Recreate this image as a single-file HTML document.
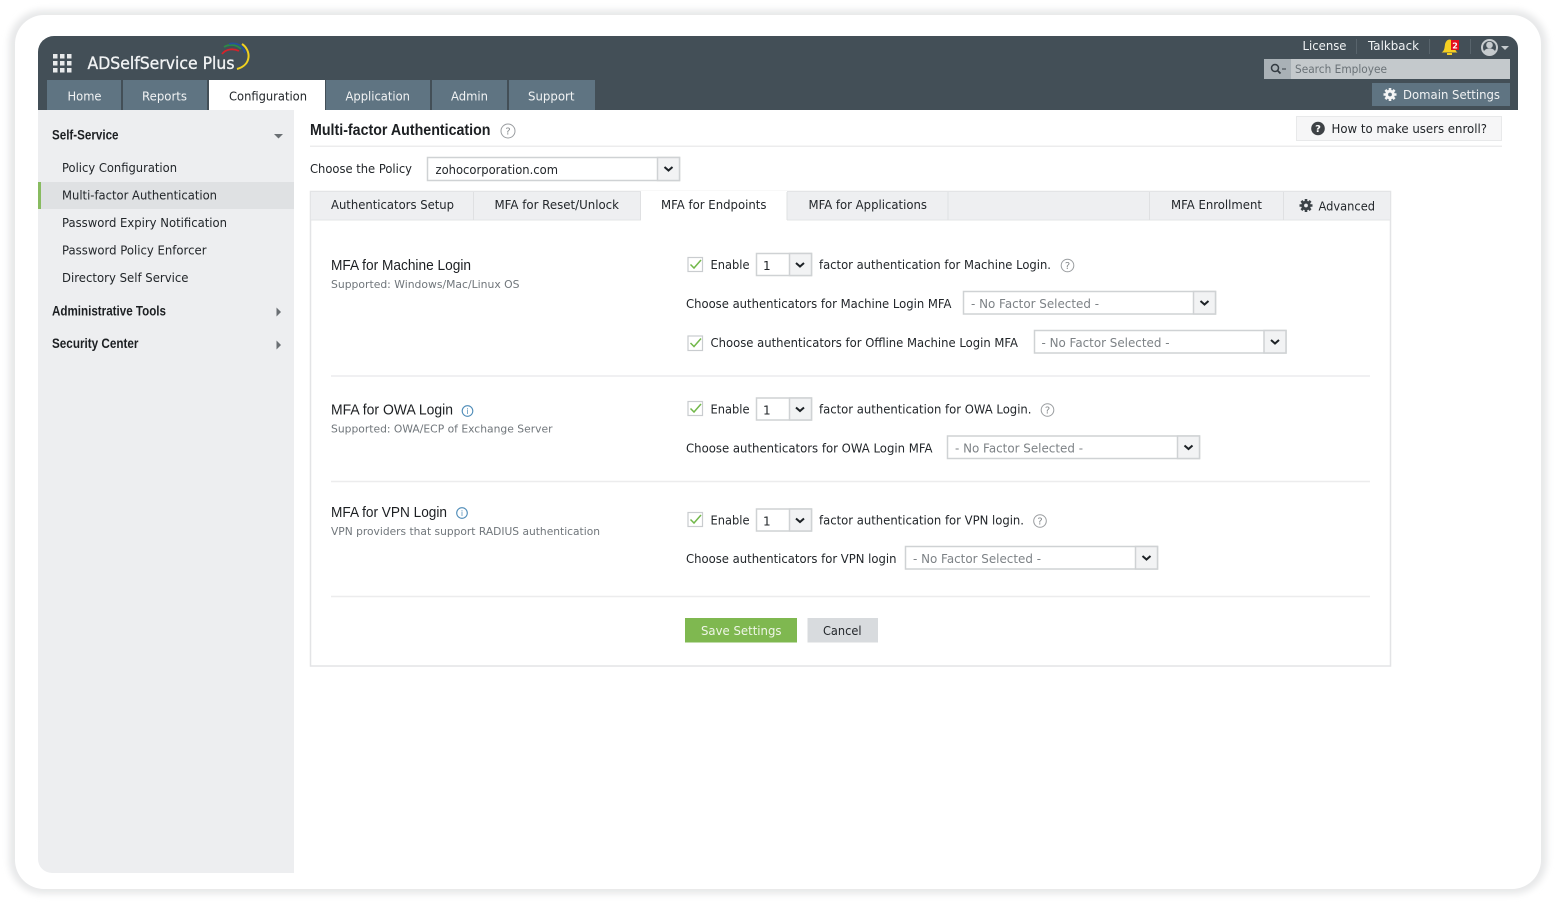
<!DOCTYPE html>
<html><head><meta charset="utf-8"><title>ADSelfService Plus</title>
<style>
html,body{margin:0;padding:0;background:#fff;width:1557px;height:905px;overflow:hidden}
svg{display:block;filter:blur(.25px)}
text{font-family:"DejaVu Sans","Liberation Sans",sans-serif;font-size:12px;fill:#22262a}
.h{font-family:"Liberation Sans",sans-serif;font-size:15px;fill:#1c1f22}
.b{font-family:"Liberation Sans",sans-serif;font-size:13.5px;font-weight:bold;fill:#1c1f22}
.w{fill:#f1f3f4}.g{fill:#70767b;font-size:11px}.p{fill:#7d8286}
.sel{fill:#fff;stroke:#cfd2d4;stroke-width:1.5}.arr{fill:#f2f3f4;stroke:#cfd2d4;stroke-width:1.5}
.chev{fill:none;stroke:#1d2226;stroke-width:2}
.cb{fill:#fff;stroke:#c9cccf;stroke-width:1.2}.ck{fill:none;stroke:#72b84a;stroke-width:1.5}
.ln{stroke:#ececed;stroke-width:1.5}
.q{fill:none;stroke:#9a9da0;stroke-width:1}
.qt{font-size:10px;fill:#85898c;text-anchor:middle}
.i{fill:none;stroke:#4f8cb8;stroke-width:1.1}.it{font-size:8px;fill:#4f8cb8;text-anchor:middle}
</style></head><body>
<svg width="1557" height="905" viewBox="0 0 1557 905" xmlns="http://www.w3.org/2000/svg">
<defs>
<filter id="sh" x="-5%" y="-5%" width="110%" height="110%"><feGaussianBlur stdDeviation="3.500"/></filter>
<g id="gear"><g stroke="currentColor" stroke-width="2.600"><path d="M0-6.500V6.500M-6.500 0H6.500M-4.600-4.600L4.600 4.600M-4.600 4.600L4.600-4.600"/></g><circle r="4.800" fill="currentColor"/><circle r="1.900" fill="var(--c,#fff)"/></g>
</defs>
<rect width="1557" height="905" fill="#fff"/>
<rect x="9" y="10" width="1538" height="884" rx="34" fill="#e7e8e9" filter="url(#sh)"/>
<rect x="15" y="15" width="1526" height="874" rx="29" fill="#fff"/>

<!-- header -->
<path d="M38 110V52a16 16 0 0 1 16-16H1506a12 12 0 0 1 12 12V110Z" fill="#434f57"/>
<g fill="#e8eaeb"><rect x="53" y="54" width="4.500" height="4.500"/><rect x="60" y="54" width="4.500" height="4.500"/><rect x="67" y="54" width="4.500" height="4.500"/><rect x="53" y="61" width="4.500" height="4.500"/><rect x="60" y="61" width="4.500" height="4.500"/><rect x="67" y="61" width="4.500" height="4.500"/><rect x="53" y="68" width="4.500" height="4.500"/><rect x="60" y="68" width="4.500" height="4.500"/><rect x="67" y="68" width="4.500" height="4.500"/></g>
<text x="87.500" y="69" textLength="147" lengthAdjust="spacingAndGlyphs" style="font-size:17px;stroke:#f1f3f4;stroke-width:.35" class="w">ADSelfService Plus</text>
<path d="M222 54c4-5 11-6 17-3" fill="none" stroke="#d8222a" stroke-width="1.800"/>
<path d="M224 47c5-3 12-3 17 2" fill="none" stroke="#2b8a46" stroke-width="1.800"/>
<path d="M229 44c7-2 14 1 16 9" fill="none" stroke="#26509c" stroke-width="1.800"/>
<path d="M242 44c9 6 10 21-5 25" fill="none" stroke="#f1d21f" stroke-width="2"/>

<!-- nav tabs -->
<g fill="#5f7482"><rect x="47" y="80" width="74" height="30"/><rect x="123" y="80" width="84" height="30"/><rect x="326" y="80" width="104" height="30"/><rect x="432" y="80" width="75" height="30"/><rect x="509" y="80" width="86" height="30"/></g>
<rect x="209" y="80" width="116" height="31" fill="#fff"/>
<text x="67.500" y="100.500" textLength="34" lengthAdjust="spacingAndGlyphs" class="w">Home</text>
<text x="142" y="100.500" textLength="45" lengthAdjust="spacingAndGlyphs" class="w">Reports</text>
<text x="229" y="100.500" textLength="78" lengthAdjust="spacingAndGlyphs">Configuration</text>
<text x="345.500" y="100.500" textLength="64.500" lengthAdjust="spacingAndGlyphs" class="w">Application</text>
<text x="451" y="100.500" textLength="37" lengthAdjust="spacingAndGlyphs" class="w">Admin</text>
<text x="528" y="100.500" textLength="46.500" lengthAdjust="spacingAndGlyphs" class="w">Support</text>

<!-- top right -->
<text x="1302.500" y="50" textLength="44" lengthAdjust="spacingAndGlyphs" class="w">License</text>
<rect x="1356" y="39" width="1" height="15" fill="#58646c"/>
<text x="1368" y="50" textLength="51" lengthAdjust="spacingAndGlyphs" class="w">Talkback</text>
<rect x="1429" y="39" width="1" height="15" fill="#58646c"/>
<path d="M1441.500 52.500c3-1.500 3-5 3.500-8s2.500-5 4.500-5 4.500 2 5 5 .5 6.500 3 8Z" fill="#f5cf22"/><rect x="1447" y="53" width="5" height="2" fill="#f5cf22"/>
<rect x="1451" y="40" width="8" height="10" fill="#e3101d"/>
<text x="1455" y="48.500" text-anchor="middle" style="font-size:8px;font-weight:bold;fill:#fff">2</text>
<rect x="1470" y="39" width="1" height="15" fill="#58646c"/>
<circle cx="1489.500" cy="47.500" r="7.500" fill="none" stroke="#c6cbce" stroke-width="2"/>
<circle cx="1489.500" cy="45" r="3.300" fill="#c6cbce"/><path d="M1483.500 52.500c1-3.500 3.500-4 6-4s5 .5 6 4l-3 2.500h-6Z" fill="#c6cbce"/>
<path d="M1501 46h8l-4 4Z" fill="#c6cbce"/>
<rect x="1264" y="59" width="246" height="20" fill="#c4c9cc"/><rect x="1264" y="59" width="27" height="20" fill="#a9b1b6"/>
<circle cx="1275" cy="68" r="3.500" fill="none" stroke="#333b41" stroke-width="1.500"/><path d="M1277.500 70.500l3 3" stroke="#333b41" stroke-width="1.800"/><path d="M1282 69h4" stroke="#333b41" stroke-width="1"/>
<text x="1295" y="73" textLength="92" lengthAdjust="spacingAndGlyphs" style="font-size:11.500px;fill:#6a7277">Search Employee</text>
<rect x="1372" y="83" width="138" height="23" fill="#5f7482"/>
<use href="#gear" x="1390" y="94.500" style="color:#f4f5f6;--c:#5f7482"/>
<text x="1403" y="99" textLength="97" lengthAdjust="spacingAndGlyphs" class="w">Domain Settings</text>

<!-- sidebar -->
<path d="M38 110H294V873H52a14 14 0 0 1-14-14Z" fill="#edeef0"/>
<rect x="38" y="182" width="256" height="27" fill="#dfe1e3"/><rect x="38" y="182" width="3" height="27" fill="#88bb60"/>
<text x="52" y="139.500" textLength="66.500" lengthAdjust="spacingAndGlyphs" class="b">Self-Service</text>
<path d="M274 134h9l-4.500 4.500Z" fill="#6a6f73"/>
<text x="62" y="172" textLength="115" lengthAdjust="spacingAndGlyphs">Policy Configuration</text>
<text x="62" y="199.500" textLength="155" lengthAdjust="spacingAndGlyphs">Multi-factor Authentication</text>
<text x="62" y="227" textLength="165" lengthAdjust="spacingAndGlyphs">Password Expiry Notification</text>
<text x="62" y="254.500" textLength="144.500" lengthAdjust="spacingAndGlyphs">Password Policy Enforcer</text>
<text x="62" y="282" textLength="126.500" lengthAdjust="spacingAndGlyphs">Directory Self Service</text>
<text x="52" y="315.500" textLength="114" lengthAdjust="spacingAndGlyphs" class="b">Administrative Tools</text>
<path d="M276.500 307.500v9l4.500-4.500Z" fill="#6a6f73"/>
<text x="52" y="348" textLength="86.500" lengthAdjust="spacingAndGlyphs" class="b">Security Center</text>
<path d="M276.500 340.500v9l4.500-4.500Z" fill="#6a6f73"/>

<!-- title -->
<text x="310" y="135" textLength="180.500" lengthAdjust="spacingAndGlyphs" style="font-family:'Liberation Sans',sans-serif;font-size:15.500px;font-weight:bold;fill:#1c1f22">Multi-factor Authentication</text>
<circle cx="508" cy="131" r="7" class="q"/><text x="508" y="134.500" class="qt">?</text>
<rect x="1296.500" y="116.500" width="205" height="24" fill="#f6f6f7" stroke="#e8e9ea"/>
<circle cx="1318" cy="128.500" r="6.800" fill="#3e4246"/><text x="1318" y="132" style="font-size:10px;font-weight:bold;fill:#fff;text-anchor:middle">?</text>
<text x="1331.500" y="133" textLength="155.500" lengthAdjust="spacingAndGlyphs">How to make users enroll?</text>
<rect x="310" y="145.500" width="1192" height="1.500" fill="#ececed"/>
<text x="310" y="173" textLength="102" lengthAdjust="spacingAndGlyphs">Choose the Policy</text>
<rect x="427.500" y="157.500" width="252" height="23" class="sel"/><rect x="657.500" y="157.500" width="22" height="23" class="arr"/>
<path d="M664.500 167l4 3.500 4-3.500" class="chev"/>
<text x="435.500" y="174" textLength="122.500" lengthAdjust="spacingAndGlyphs">zohocorporation.com</text>

<!-- panel -->
<rect x="310.500" y="191.500" width="1080" height="474.500" fill="#fff" stroke="#e3e4e6" stroke-width="1.500"/>
<rect x="310.500" y="191.500" width="1080" height="28.500" fill="#eeeff1" stroke="#e3e4e6"/>
<rect x="641" y="191" width="146" height="30" fill="#fff"/>
<path d="M473.500 192v28M640.500 192v28M787 192v28M948 192v28M1149.500 192v28M1283.500 192v28" stroke="#dfe0e2"/>
<text x="331" y="209" textLength="123" lengthAdjust="spacingAndGlyphs">Authenticators Setup</text>
<text x="494.500" y="209" textLength="124.500" lengthAdjust="spacingAndGlyphs">MFA for Reset/Unlock</text>
<text x="661" y="209" textLength="105.500" lengthAdjust="spacingAndGlyphs">MFA for Endpoints</text>
<text x="808.500" y="209" textLength="118.500" lengthAdjust="spacingAndGlyphs">MFA for Applications</text>
<text x="1171" y="209" textLength="91" lengthAdjust="spacingAndGlyphs">MFA Enrollment</text>
<use href="#gear" x="1306" y="205.500" style="color:#3b4247;--c:#eeeff1"/>
<text x="1318.500" y="210.500" textLength="56.500" lengthAdjust="spacingAndGlyphs">Advanced</text>

<!-- Machine login -->
<text x="331" y="270" textLength="140" lengthAdjust="spacingAndGlyphs" class="h">MFA for Machine Login</text>
<text x="331" y="288" textLength="188.500" lengthAdjust="spacingAndGlyphs" class="g">Supported: Windows/Mac/Linux OS</text>
<rect x="688" y="257.500" width="14.500" height="14" class="cb"/><path d="M690.500 264.500l3.500 3.500 7-8" class="ck"/>
<text x="710.500" y="269" textLength="39" lengthAdjust="spacingAndGlyphs">Enable</text>
<rect x="756.500" y="253.500" width="55" height="22" class="sel"/><rect x="789.500" y="253.500" width="22" height="22" class="arr"/><path d="M796 263l4 3.500 4-3.500" class="chev"/>
<text x="763" y="270">1</text>
<text x="819" y="269" textLength="232" lengthAdjust="spacingAndGlyphs">factor authentication for Machine Login.</text>
<circle cx="1067.500" cy="265.500" r="6.300" class="q"/><text x="1067.500" y="269" class="qt">?</text>
<text x="686" y="308" textLength="265.500" lengthAdjust="spacingAndGlyphs">Choose authenticators for Machine Login MFA</text>
<rect x="963.500" y="291.500" width="252" height="22.500" class="sel"/><rect x="1193.500" y="291.500" width="22" height="22.500" class="arr"/><path d="M1200.500 301l4 3.500 4-3.500" class="chev"/>
<text x="971" y="308" textLength="128" lengthAdjust="spacingAndGlyphs" class="p">- No Factor Selected -</text>
<rect x="688" y="336" width="14.500" height="14.500" class="cb"/><path d="M690.500 343l3.500 3.500 7-8" class="ck"/>
<text x="710.500" y="347" textLength="307.500" lengthAdjust="spacingAndGlyphs">Choose authenticators for Offline Machine Login MFA</text>
<rect x="1034.500" y="330.500" width="251.500" height="22.500" class="sel"/><rect x="1264" y="330.500" width="22" height="22.500" class="arr"/><path d="M1271 340l4 3.500 4-3.500" class="chev"/>
<text x="1041.500" y="347" textLength="128" lengthAdjust="spacingAndGlyphs" class="p">- No Factor Selected -</text>
<path d="M331 376h1039" class="ln"/>

<!-- OWA -->
<text x="331" y="414.500" textLength="122" lengthAdjust="spacingAndGlyphs" class="h">MFA for OWA Login</text>
<circle cx="467.500" cy="411" r="5.300" class="i"/><text x="467.500" y="414" class="it">i</text>
<text x="331" y="432.500" textLength="221.500" lengthAdjust="spacingAndGlyphs" class="g">Supported: OWA/ECP of Exchange Server</text>
<rect x="688" y="401.500" width="14.500" height="14" class="cb"/><path d="M690.500 408.500l3.500 3.500 7-8" class="ck"/>
<text x="710.500" y="413.500" textLength="39" lengthAdjust="spacingAndGlyphs">Enable</text>
<rect x="756.500" y="398" width="55" height="22" class="sel"/><rect x="789.500" y="398" width="22" height="22" class="arr"/><path d="M796 407.500l4 3.500 4-3.500" class="chev"/>
<text x="763" y="414.500">1</text>
<text x="819" y="413.500" textLength="212.500" lengthAdjust="spacingAndGlyphs">factor authentication for OWA Login.</text>
<circle cx="1047.500" cy="410" r="6.300" class="q"/><text x="1047.500" y="413.500" class="qt">?</text>
<text x="686" y="452.500" textLength="246.500" lengthAdjust="spacingAndGlyphs">Choose authenticators for OWA Login MFA</text>
<rect x="947.500" y="436" width="252" height="22.500" class="sel"/><rect x="1177.500" y="436" width="22" height="22.500" class="arr"/><path d="M1184.500 445.500l4 3.500 4-3.500" class="chev"/>
<text x="955" y="452.500" textLength="128" lengthAdjust="spacingAndGlyphs" class="p">- No Factor Selected -</text>
<path d="M331 481.500h1039" class="ln"/>

<!-- VPN -->
<text x="331" y="517" textLength="116" lengthAdjust="spacingAndGlyphs" class="h">MFA for VPN Login</text>
<circle cx="462" cy="513" r="5.300" class="i"/><text x="462" y="516" class="it">i</text>
<text x="331" y="535" textLength="269" lengthAdjust="spacingAndGlyphs" class="g">VPN providers that support RADIUS authentication</text>
<rect x="688" y="512.500" width="14.500" height="14" class="cb"/><path d="M690.500 519.500l3.500 3.500 7-8" class="ck"/>
<text x="710.500" y="524.500" textLength="39" lengthAdjust="spacingAndGlyphs">Enable</text>
<rect x="756.500" y="509" width="55" height="22" class="sel"/><rect x="789.500" y="509" width="22" height="22" class="arr"/><path d="M796 518.500l4 3.500 4-3.500" class="chev"/>
<text x="763" y="525.500">1</text>
<text x="819" y="524.500" textLength="205" lengthAdjust="spacingAndGlyphs">factor authentication for VPN login.</text>
<circle cx="1040" cy="521" r="6.300" class="q"/><text x="1040" y="524.500" class="qt">?</text>
<text x="686" y="563" textLength="210.500" lengthAdjust="spacingAndGlyphs">Choose authenticators for VPN login</text>
<rect x="905.500" y="546.500" width="252" height="22.500" class="sel"/><rect x="1135.500" y="546.500" width="22" height="22.500" class="arr"/><path d="M1142.500 556l4 3.500 4-3.500" class="chev"/>
<text x="913" y="563" textLength="128" lengthAdjust="spacingAndGlyphs" class="p">- No Factor Selected -</text>
<path d="M331 596.500h1039" class="ln"/>

<!-- buttons -->
<rect x="685" y="618" width="112" height="24.500" fill="#7fb850"/>
<text x="701" y="635" textLength="80.500" lengthAdjust="spacingAndGlyphs" style="fill:#eef5e6">Save Settings</text>
<rect x="807.500" y="618" width="70.500" height="24.500" fill="#d8dbde"/>
<text x="823" y="635" textLength="38.500" lengthAdjust="spacingAndGlyphs">Cancel</text>
</svg>
</body></html>
